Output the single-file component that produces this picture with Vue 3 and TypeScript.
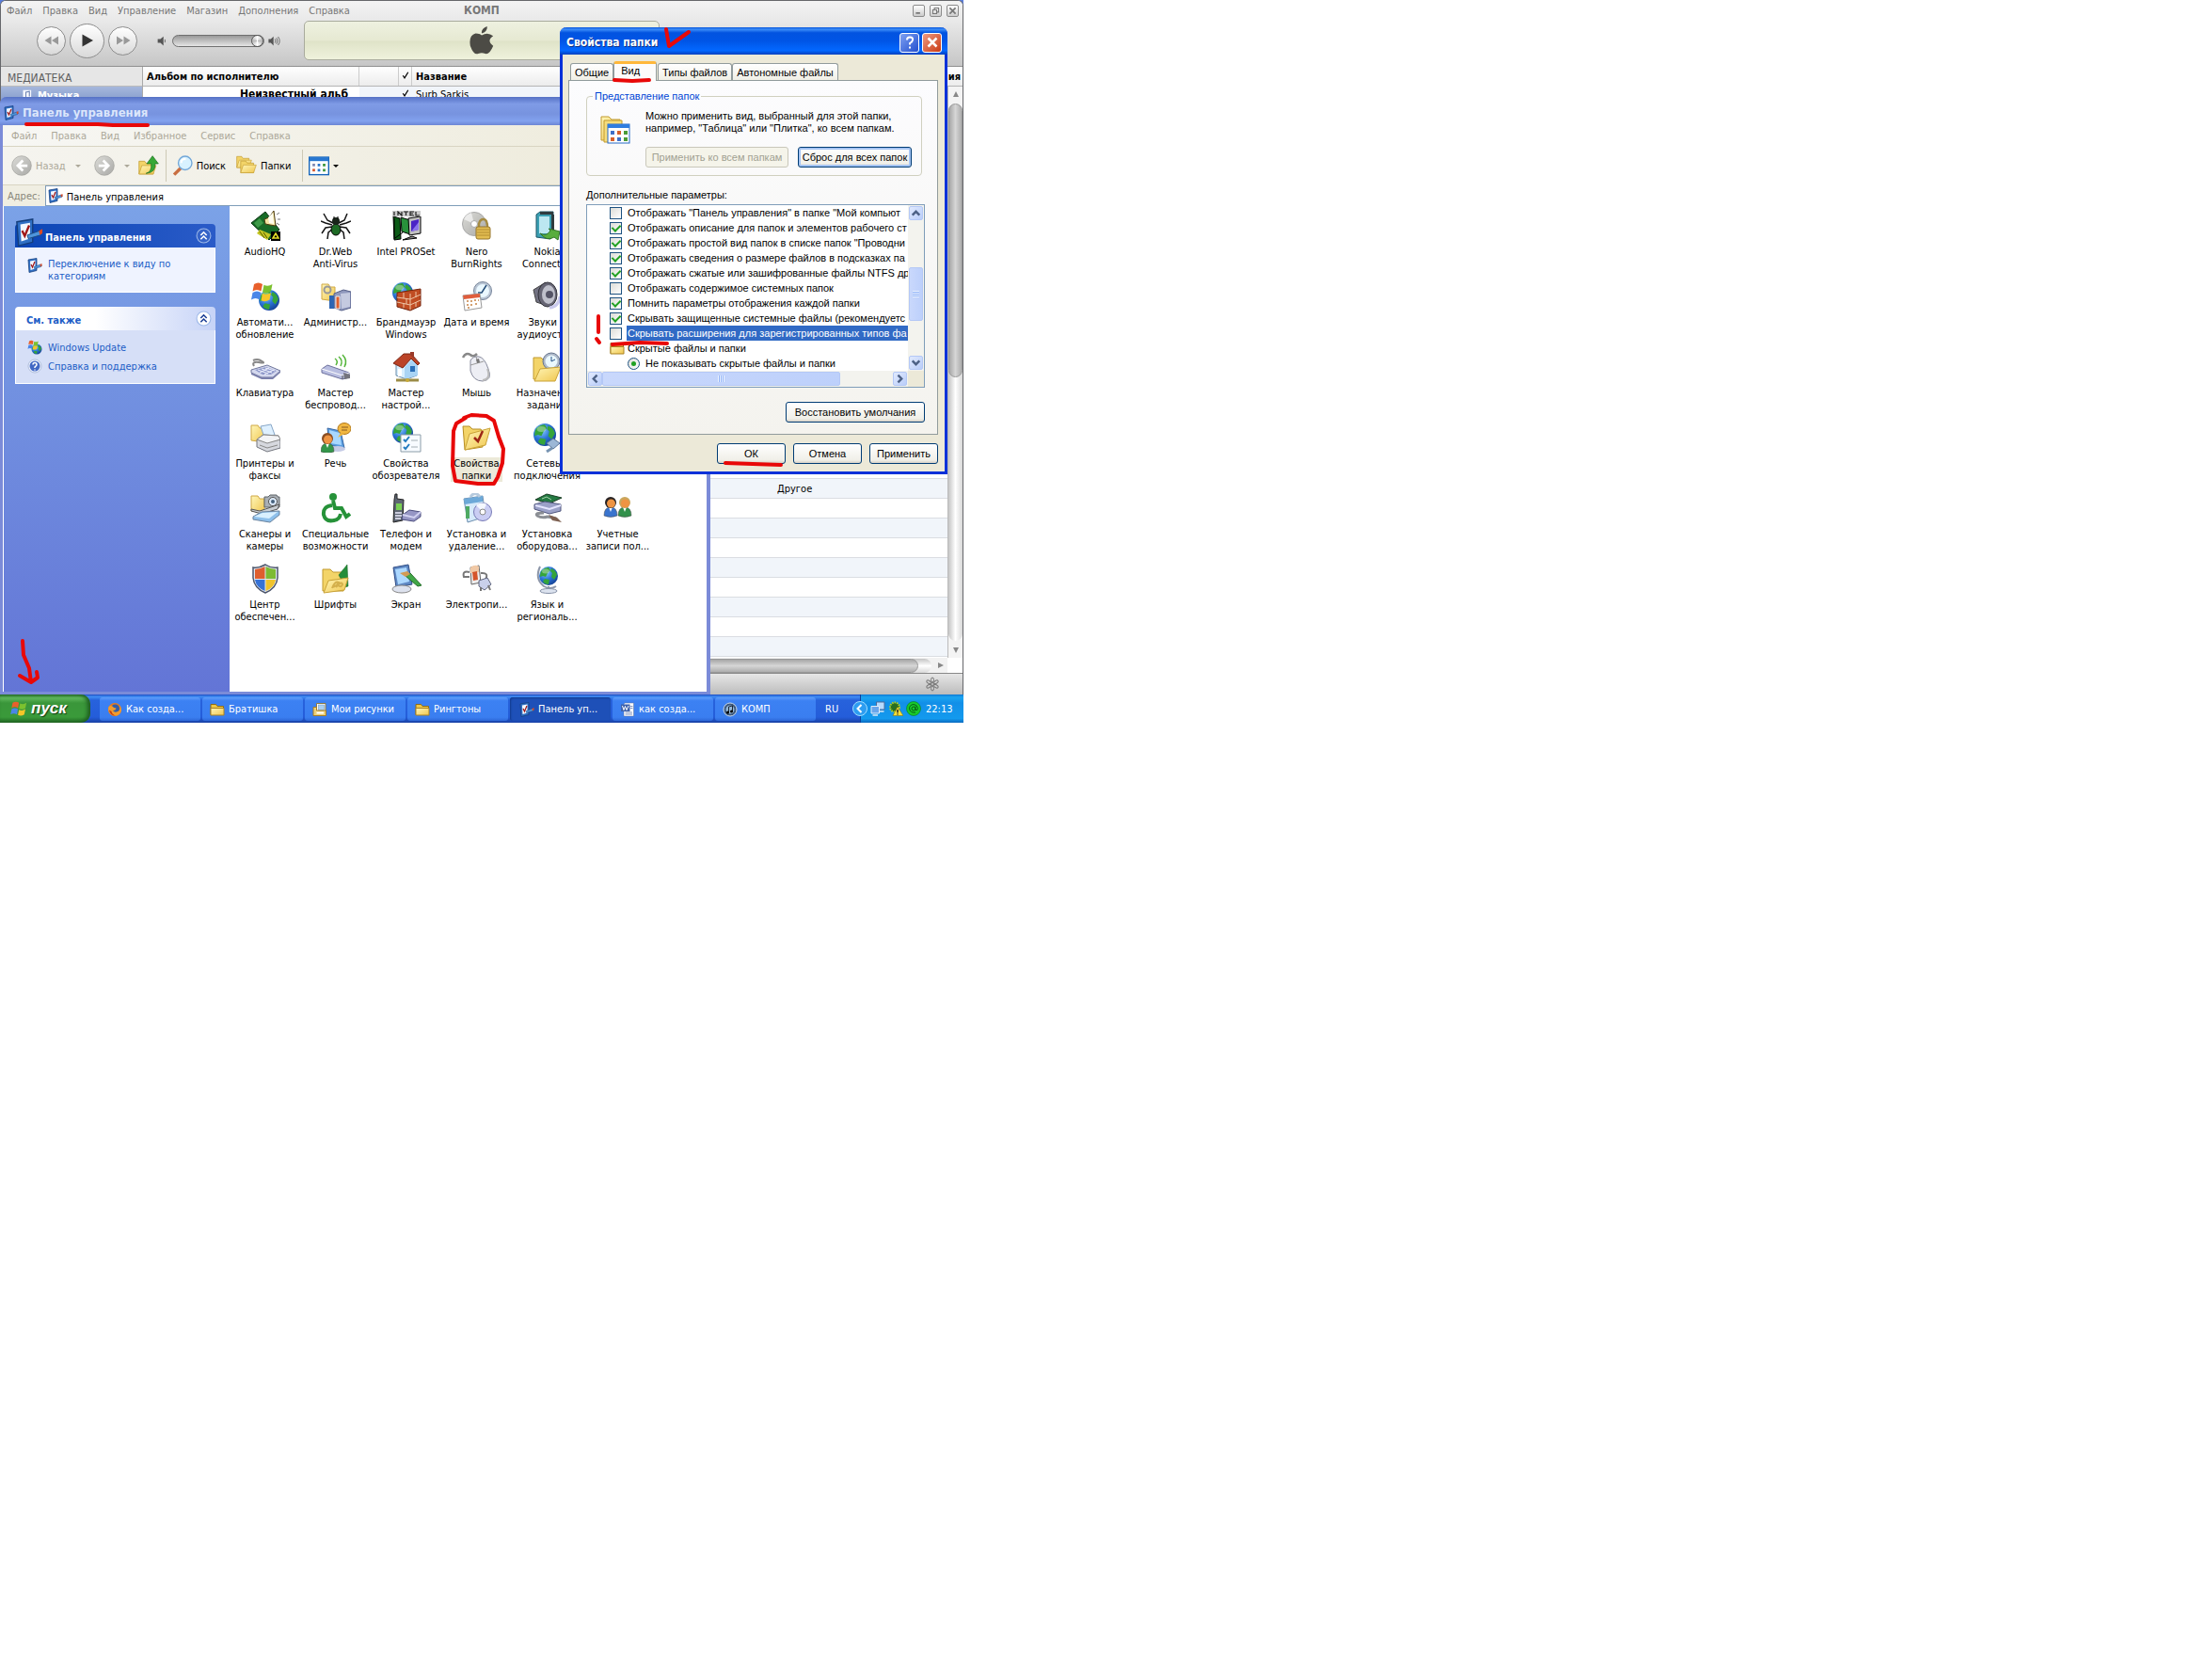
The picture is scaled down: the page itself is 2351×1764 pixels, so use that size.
<script setup lang="ts">
import { h, ref } from 'vue'

const globe = (x: number, y: number, r: number): string =>
  `<g transform="translate(${x} ${y}) scale(${r / 10})"><circle r="10" fill="url(#g-globe)"/><path d="M-7-6Q-4-9 0-9L2-6L-1-3L-3 1L-6 0L-9 1Q-9-4-7-6ZM3-8Q8-6 9-1L6 4L3 1L4-3L2-5ZM-4 3L1 4L0 9Q-4 9-6 6Z" fill="#35a43a"/><ellipse cx="-3" cy="-5" rx="4" ry="2.500" fill="#fff" opacity=".35"/></g>`

const folder = (x: number, y: number, s: number): string =>
  `<g transform="translate(${x} ${y}) scale(${s})"><path d="M1 2H9L11 5H21V20H1Z" fill="#f3d468" stroke="#c19a2e"/><path d="M1 20L5 8H25L21 20Z" fill="url(#g-folder)" stroke="#c9a236"/></g>`

const backFolder = `<path d="M1 3H8L10 6H15V21L1 19Z" fill="url(#g-folder)" stroke="#cfa845"/>`

const person = (x: number, y: number, hair: string, shirt: string): string =>
  `<g transform="translate(${x} ${y})"><path d="M0 20Q0 11 7 11Q14 11 14 20Q7 23 0 20Z" fill="${shirt}" stroke="#444" stroke-width=".5"/><path d="M5 11H9L7 16Z" fill="#fff"/><circle cx="7" cy="6" r="6" fill="${hair}"/><circle cx="7.500" cy="7" r="4.500" fill="#ee9443"/></g>`

const flag = (x: number, y: number, s: number): string =>
  `<g transform="translate(${x} ${y}) scale(${s})"><path d="M2 2Q5 0 8 2L7 7Q4 5 1 7Z" fill="#e8602c"/><path d="M9 2.500Q12 4 15 2L14 7Q11 9 8 7.500Z" fill="#7cc12f"/><path d="M1 8Q4 6 7 8L6 13Q3 11 0 13Z" fill="#4a86e8"/><path d="M8 8.500Q11 10 14 8L13 13Q10 15 7 13.500Z" fill="#f6c628"/></g>`

const applet = `<path d="M2 4L20 1V27L4 31Z" fill="#2f6fc4" stroke="#163f7c" stroke-width="1.500"/><path d="M6 7L17 5V23L7 26Z" fill="#f3f8ff"/><path d="M8 14L11 20L16 8" fill="none" stroke="#a01818" stroke-width="2.500"/><path d="M14 19L28 14L31 16L29 19L15 23Z" fill="#4e95dc" stroke="#1c4a80"/><path d="M27 14L31 12V17L28 19Z" fill="#d94a26"/>`

const drums = `<path d="M1 3H9L12 6H21V28H1Z" fill="url(#g-folder)" stroke="#c19a2e"/><path d="M4 7H23V30H4Z" fill="#f6dd7c" stroke="#c19a2e"/><rect x="8" y="11" width="23" height="20" fill="#fff" stroke="#2468c4"/><rect x="8" y="11" width="23" height="4" fill="#2f7de0"/><path d="M11 18h4v4h-4zM18 25h4v4h-4z" fill="#3f70c9"/><path d="M18 18h4v4h-4zM11 25h4v4h-4z" fill="#d9602c"/><path d="M25 18h4v4h-4zM25 25h4v4h-4z" fill="#4b9b37"/>`

const icons: Record<string, string> = {
  audio: `<path d="M1 13L16 1L31 20L20 31Z" fill="#176b26" stroke="#0b3413"/><path d="M4 13L10 8L14 13L8 18Z" fill="#3e9a48"/><path d="M7 24L10 20L22 25L18 31Z" fill="#c4c623"/><path d="M10 22l5 7M14 23l4 6" stroke="#565900"/><path d="M15 9L20 7L25 0L27 16L21 15L16 14Z" fill="#f4e6a2" stroke="#4b3a10"/><path d="M19 7L24 2L25 14L20 13Z" fill="#fffdf0"/><path d="M28 4l3-2M29 9h3M28 13l3 2" stroke="#777"/><rect x="22" y="22" width="10" height="10" fill="#000"/><path d="M24 29L27 24L30 29Z" fill="none" stroke="#e6df29" stroke-width="1.500"/>`,
  spider: `<g fill="none" stroke="#151515" stroke-width="1.500"><path d="M13 13L7 10L3 3M12 15L5 13L0 11M12 17L5 18L1 24M13 19L8 23L7 30M19 13L25 10L28 3M20 15L27 13L32 11M20 17L27 18L31 24M19 19L24 23L25 30"/></g><ellipse cx="16" cy="20" rx="5" ry="6" fill="#1d6a25" stroke="#000"/><circle cx="16" cy="11" r="4" fill="#1a251b"/><path d="M14 6v3M18 6v3" stroke="#000"/>`,
  intel: `<path d="M2 6L9 8L10 30L3 31Z" fill="#0c5b17" stroke="#000"/><path d="M10 7L20 10V25L11 22Z" fill="#28913b" stroke="#000"/><path d="M18 8L31 6V24L19 26Z" fill="#c0c0c0" stroke="#000"/><path d="M21 11L29 9V20L21 22Z" fill="#4b23c6"/><path d="M21 22L29 12V20Z" fill="#8d75eb"/><path d="M3 8V30M12 23L4 29M22 27L12 31L27 29Z" stroke="#000" fill="#888"/><path d="M1 0H31V6H1Z" fill="#c9c9c9"/><path d="M3 1v4M7 5V1L11 5V1M13 1H18M15.500 1V5M24 1H20V5H24M20 3H23M26 1V5H30" fill="none" stroke="#222" stroke-width="1.200"/>`,
  nero: `<circle cx="13" cy="14" r="12.500" fill="url(#g-disc)" stroke="#aaa"/><path d="M13 14L2 9A12 12 0 0 1 10 2Z" fill="#f7f7f7" opacity=".7"/><circle cx="13" cy="14" r="3.500" fill="#fff" stroke="#aaa"/><path d="M18 19V14Q19 9 23 9Q27 9 27 18" fill="none" stroke="#a58b42" stroke-width="2.500"/><rect x="15" y="17" width="15" height="13" rx="2" fill="#e2bd52" stroke="#95752a"/><path d="M16 20H29M16 23H29M16 26H29" stroke="#b28b2e"/>`,
  nokia: `<path d="M4 4L8 1H22V27L19 30L4 28Z" fill="#3b9fb2" stroke="#1c5668"/><path d="M7 6H18V24H7Z" fill="#bce7f1"/><path d="M8 1H22V4H8ZM20 4H23V25H20Z" fill="#2f3b3f"/><path d="M8 24Q15 28 19 21L17 19L29 22L27 31L23 28Q15 33 8 24Z" fill="#58ad3e" stroke="#33762a"/>`,
  update: `${globe(20, 20, 11)}${flag(1, 0, 1.5)}`,
  admin: `${backFolder}<path d="M14 13L24 9L32 11V28L22 31L14 28Z" fill="#8f98bd" stroke="#555f88"/><path d="M21 13L31 12V27L22 29Z" fill="#c4cae0"/><path d="M9 15H14V29H9Z" fill="#2d65b3"/><path d="M16 16H20V29H16Z" fill="#de5f2d" stroke="#eee"/><circle cx="7" cy="9" r="3.500" fill="none" stroke="#999" stroke-width="2"/>`,
  firewall: `${globe(12, 12, 11)}<path d="M6 12L31 8V26L20 31L6 27Z" fill="#c04c22" stroke="#74250e"/><path d="M6 17L20 19L31 14M6 22L20 25L31 20M20 13V30M13 12V18M13 23V28M26 11V17M26 22V27M16 18V24" stroke="#edc5a6" stroke-width="1" fill="none"/>`,
  date: `<circle cx="22" cy="10" r="9.500" fill="#b9c5d4" stroke="#77859a"/><circle cx="22" cy="10" r="7" fill="#eaf8ff"/><path d="M26 4L21 12H17" fill="none" stroke="#254d78" stroke-width="1.500"/><path d="M1 15L19 13L21 28L3 31Z" fill="#fff" stroke="#999"/><path d="M1 15L19 13V17L2 19Z" fill="#e05d3c"/><path d="M5 21h2M9 21h2M13 20h2M17 20h1M5 25h2M9 25h2M14 24h2M6 28h2" stroke="#d4a171" stroke-width="2"/>`,
  sound: `<path d="M1 9L14 1L16 26L4 22Z" fill="#727282" stroke="#444"/><ellipse cx="16" cy="14" rx="10" ry="13" fill="#666574" stroke="#34343c"/><ellipse cx="17" cy="14" rx="7" ry="10" fill="#bfc0cb"/><circle cx="18" cy="14" r="4" fill="#555466"/><path d="M18 28Q28 27 29 16" fill="none" stroke="#c9c9ed" stroke-width="3"/>`,
  keyboard: `<path d="M4 15Q1 10 9 11Q18 13 11 9Q7 7 3 9" fill="none" stroke="#888" stroke-width="2"/><path d="M1 19L18 14L32 20L24 27L12 27L1 22Z" fill="#d4d8ee" stroke="#70779c"/><path d="M5 19L17 16L28 20L22 24H13Z" fill="#8f99ca"/><path d="M8 19L19 23M12 18L23 22M16 17L26 20M10 22L20 17M15 24L25 19" stroke="#eef1ff"/><path d="M1 22L12 27H24L32 20V22L24 29H12L1 24Z" fill="#7b80ac"/>`,
  wireless: `<path d="M1 18L7 14L30 22V27L23 29L1 22Z" fill="#b8bde0" stroke="#6c709d"/><path d="M1 18L23 25L30 22" fill="none" stroke="#fff"/><path d="M23 25V29" stroke="#555"/><path d="M24 22L31 24V28L25 29Z" fill="#74747d"/><path d="M15 7q4 3 1 7M19 5q5 4 2 10M23 3q6 6 2 13" fill="none" stroke="#54b53a" stroke-width="1.500"/>`,
  home: `<path d="M5 12L16 4L27 11V25L16 29L5 25Z" fill="#d8efff" stroke="#6b8ba8"/><path d="M14 16L22 8L28 12V25L14 29Z" fill="#a9d4f5"/><path d="M2 12L13 2H21L30 12L28 14L21 7L12 17Z" fill="#bb4327" stroke="#7b2817"/><path d="M20 3V0H24V7Z" fill="#9a3a29"/><rect x="7" y="18" width="4" height="8" fill="#fff"/><rect x="20" y="15" width="5" height="6" fill="#2b6fb8"/><path d="M5 30H29" stroke="#9b8c47" stroke-width="3"/><circle cx="17" cy="30" r="2" fill="#c8aa38"/>`,
  mouse: `<path d="M1 6Q4 0 9 3Q12 6 16 2" fill="none" stroke="#888" stroke-width="2.500"/><path d="M9 9Q12 4 18 5Q24 6 28 18Q33 30 22 31Q12 31 9 20Z" fill="#edeef4" stroke="#86899b"/><path d="M9 14L23 10M15 5L17 12" stroke="#999" fill="none"/><path d="M15 8L18 7L19 11L16 12Z" fill="#777"/><path d="M22 30Q31 29 27 18" fill="none" stroke="#bbb" stroke-width="2"/>`,
  tasks: `<path d="M1 6H9L12 9H20V29H1Z" fill="#f3d468" stroke="#c19a2e"/><circle cx="20" cy="10" r="9" fill="#aeb9c9" stroke="#65748d"/><circle cx="20" cy="10" r="6.500" fill="#eaf8ff"/><path d="M20 5V10L24 8" fill="none" stroke="#245084"/><path d="M2 31L8 18L30 16L24 31Z" fill="url(#g-folder)" stroke="#c9a236"/>`,
  printer: `${backFolder}<path d="M11 4L22 2L26 13L15 16Z" fill="#def0ff" stroke="#86a6c7"/><path d="M7 18L14 13L30 14L32 20V27L18 31L7 26Z" fill="#d6d8de" stroke="#74777f"/><path d="M7 18L18 21L32 18M10 24L18 27L29 24" fill="none" stroke="#888"/><path d="M7 18L14 13L30 14L32 18L18 22Z" fill="#f3f4f6" stroke="#888"/>`,
  speech: `<path d="M7 6L21 9L25 27L9 24Z" fill="#5b9ee0" stroke="#3866a3"/><path d="M9 8L20 11L22 24L10 22Z" fill="#a8d8ff"/><ellipse cx="18" cy="28" rx="8" ry="3" fill="#c5cbe6"/><ellipse cx="25" cy="6.500" rx="7" ry="6" fill="#f1b741" stroke="#b37818"/><path d="M21 11L18 16L25 12Z" fill="#f1b741"/><path d="M22 5H29M22 8H28" stroke="#875b22"/>${person(0, 11, '#8b4d22', '#34964a')}`,
  internet: `${globe(12, 11, 11)}<path d="M10 13H31V31H10Z" fill="#f7fbff" stroke="#8b9ca8"/><path d="M13 18L15 20L19 15M13 26L15 28L19 23" fill="none" stroke="#237bc0" stroke-width="2"/><path d="M21 19H28M21 26H28" stroke="#a5b0b5"/>`,
  folderopts: `<path d="M1 4H8L11 7H20L22 10V26L3 29Z" fill="#f3d468" stroke="#b78d25"/><path d="M3 29L8 12L30 6L25 24Z" fill="url(#g-folder)" stroke="#c9a236"/><path d="M13 16L17 20L22 9" fill="none" stroke="#9d2715" stroke-width="2.500"/>`,
  network: `${globe(13, 13, 12)}<path d="M15 22L22 17L29 22L22 28Z" fill="#9cb7d6" stroke="#5a7699"/><path d="M21 27L15 31" stroke="#7794b2" stroke-width="3"/>`,
  scanner: `${backFolder}<path d="M15 4H19L21 2H28L29 4H31V15H15Z" fill="#a9afb5" stroke="#5f6469"/><circle cx="24" cy="9" r="4.500" fill="#dceafa" stroke="#555"/><circle cx="24" cy="9" r="2" fill="#46627d"/><path d="M1 17L10 19L31 12L29 17L12 22L1 19Z" fill="#c8cdd2" stroke="#555"/><path d="M3 25L12 20L31 19V23L21 31L3 28Z" fill="#8ec0eb" stroke="#6a839e"/><path d="M4 25L13 21L29 20L20 27Z" fill="#d9f0ff"/>`,
  access: `<circle cx="13" cy="4" r="4" fill="#269239"/><path d="M13 8L15 16H22L27 25L31 22" fill="none" stroke="#269239" stroke-width="4"/><path d="M12 13Q2 14 3 23Q5 31 14 29Q20 28 21 22" fill="none" stroke="#269239" stroke-width="4"/>`,
  phone: `<path d="M3 7L4 1H6V6L13 7L12 29L2 31Z" fill="#5e6672" stroke="#222"/><path d="M5 11H11V18H5Z" fill="#79cf54"/><path d="M4 21H11M4 24H11M4 27H10" stroke="#ccd" stroke-width="2"/><path d="M12 23L19 18L31 20V25L24 30L11 28Z" fill="#9696c5" stroke="#4b4d7d"/><path d="M12 23L24 26L31 20" fill="none" stroke="#d2d2f1" stroke-width="2"/>`,
  install: `<path d="M2 6L22 3L25 25L6 31Z" fill="#d6eafa" stroke="#6c8eaf"/><path d="M2 6L22 3V9L3 12Z" fill="#6da9d8"/><path d="M9 4Q14-3 19 4" fill="none" stroke="#b6cadd" stroke-width="3"/><path d="M6 14V27" stroke="#4faa63" stroke-width="4"/><circle cx="22" cy="20" r="9.500" fill="#cacdf3" stroke="#777ab5"/><path d="M22 20L15 13A9 9 0 0 1 26 12Z" fill="#f5f8ff"/><circle cx="22" cy="20" r="3" fill="#fff" stroke="#888"/>`,
  hardware: `<path d="M3 7L15 1L31 5L18 11Z" fill="#247a42" stroke="#193d23"/><path d="M10 6L15 4L20 7" stroke="#a5d0a8" fill="none"/><path d="M2 12L13 9L30 12V19L18 22L2 17Z" fill="#9ba1c8" stroke="#50567f"/><path d="M3 13L18 17L30 13" stroke="#e4e5ff" fill="none" stroke-width="2"/><path d="M12 21Q2 21 5 24Q10 27 16 25L25 27" fill="none" stroke="#8b8e94" stroke-width="3"/><path d="M17 23L26 26L31 31L21 29Z" fill="#7d6051"/>`,
  users: `${person(1, 4, '#292323', '#3974ce')}${person(16, 4, '#caa65c', '#32914b')}`,
  shield: `<path d="M16 1Q9 5 3 4V15Q4 26 16 31Q28 26 29 15V4Q22 5 16 1Z" fill="#dfe6f2" stroke="#4d566b" stroke-width="1.500"/><path d="M15.500 3Q10 6 5 6V16H15.500Z" fill="#df5e2e"/><path d="M16.500 3Q22 6 27 6V16H16.500Z" fill="#7dbb32"/><path d="M5 17H15.500V29Q6 25 5 17Z" fill="#3672d6"/><path d="M16.500 17H27Q26 25 16.500 29Z" fill="#f0c32c"/>`,
  fonts: `<path d="M2 6H10L13 9H24V29H2Z" fill="#f3d468" stroke="#c19a2e"/><path d="M19 12L28 1L29 24L26 25Z" fill="#258d39" stroke="#146322" stroke-width=".5"/><path d="M3 31L8 18L29 15L25 28Z" fill="url(#g-folder)" stroke="#c9a236"/><path d="M12 26Q15 18 19 20Q17 24 12 25M16 25Q22 18 23 22Q22 26 18 23" fill="none" stroke="#d4b04c" stroke-width="2"/>`,
  display: `<path d="M2 4L18 1L22 22L5 25Z" fill="#5e88c4" stroke="#314e86"/><path d="M4 6L16 4L19 19L7 22Z" fill="#acd8ff"/><ellipse cx="11" cy="27" rx="10" ry="4" fill="#dde2ee" stroke="#888"/><path d="M15 13L20 10L32 23L28 24Z" fill="#41a747" stroke="#276f2b"/><path d="M9 10L17 8L20 11L15 14Z" fill="#d29b56"/>`,
  power: `<path d="M9 4L18 2L20 20L10 22Z" fill="#eee" stroke="#666"/><path d="M9 4Q14 0 18 3V9L9 10Z" fill="#f1c9a6"/><path d="M11 9L16 8L17 17L12 18Z" fill="#d4552c"/><path d="M8 9Q0 7 2 14H8M20 10Q29 9 25 17" fill="none" stroke="#777" stroke-width="2"/><path d="M18 18L27 15L31 22L24 28L18 24Z" fill="#c9d0eb" stroke="#60667e"/><path d="M20 25V29M28 23L30 28" stroke="#777" stroke-width="2"/>`,
  region: `<path d="M8 3Q2 16 12 24Q19 28 25 24" fill="none" stroke="#8d97a9" stroke-width="2"/>${globe(17, 13, 10)}<path d="M17 24V28" stroke="#8d97a9" stroke-width="2"/><ellipse cx="17" cy="29" rx="9" ry="2.500" fill="#dce3ef" stroke="#8590a6"/>`,
  applet,
  drums,
  help: `<circle cx="16" cy="16" r="14" fill="#eef3ff" stroke="#8095bb"/><circle cx="16" cy="16" r="11" fill="#4268c4"/><path d="M12 13Q12 9 16 9Q20 9 20 13Q20 15 16 18V20M16 23V25" fill="none" stroke="#fff" stroke-width="3"/>`,
  folder: `<path d="M2 5H13L16 9H29V27H2Z" fill="#edc748" stroke="#8d6b17" stroke-width="2"/><path d="M2 13H30V28H2Z" fill="url(#g-folder)" stroke="#aa8221" stroke-width="2"/>`,
  folders: `${folder(0, 0, .95)}${folder(6, 7, 1)}`,
  up: `${folder(0, 7, 1.1)}<path d="M12 28Q21 26 20 13H13L22 1L31 13H26Q27 27 12 28Z" fill="#37a836" stroke="#196d20"/>`,
  search: `<path d="M3 30L13 20" stroke="#c96f42" stroke-width="5"/><circle cx="20" cy="12" r="10.500" fill="#d8f2ff" stroke="#73a7d8" stroke-width="2"/><path d="M14 12Q14 5 21 6" fill="none" stroke="#fff" stroke-width="3"/>`,
  views: `<rect x="1" y="3" width="30" height="27" fill="#fff" stroke="#1464ba" stroke-width="2"/><path d="M1 3H31V9H1Z" fill="#2877d0"/><path d="M6 13h4v4H6z" fill="#7c85b0"/><path d="M14 13h4v4h-4zM14 21h4v4h-4z" fill="#2874cc"/><path d="M22 13h4v4h-4zM22 21h4v4h-4z" fill="#3b953c"/><path d="M6 21h4v4H6z" fill="#d5572c"/>`,
  back: `<circle cx="16" cy="16" r="15" fill="url(#g-disc)" stroke="#a0a09c"/><path d="M18 8L10 16L18 24M11 16H25" fill="none" stroke="#fff" stroke-width="4"/>`,
  forward: `<circle cx="16" cy="16" r="15" fill="url(#g-disc)" stroke="#a0a09c"/><path d="M14 8L22 16L14 24M21 16H7" fill="none" stroke="#fff" stroke-width="4"/>`,
  chevrons: `<circle cx="16" cy="16" r="14" fill="currentColor" stroke="#9db8e8" stroke-width="2"/><path d="M10 15L16 9L22 15M10 23L16 17L22 23" fill="none" stroke="var(--mark)" stroke-width="3"/>`,
  flag: flag(2, 1, 1.9),
  firefox: `<circle cx="16" cy="16" r="14" fill="#e77a1c"/><circle cx="17" cy="14" r="9" fill="#315da8"/><path d="M3 10Q9 5 14 12L19 13Q18 18 12 18Q16 24 25 19Q29 13 25 6Q33 13 28 23Q21 33 10 28Q0 21 3 10Z" fill="#f09b2e"/><path d="M4 17Q6 29 18 29Q10 26 9 20Z" fill="#c33917"/>`,
  pictures: `<path d="M9 10V3H28V28H9Z" fill="#fff" stroke="#8b7a43" stroke-width="2"/><rect x="13" y="6" width="12" height="11" fill="#a9cff2" stroke="#698eb4"/><path d="M2 11H9V18H29V29H2Z" fill="#ecd078" stroke="#a57d27" stroke-width="2"/><path d="M9 21H24V25H9Z" fill="#fff"/>`,
  word: `<path d="M10 2H29V30H8V5Z" fill="#fff" stroke="#596f9d"/><path d="M22 9H27M22 13H27M11 22H26M11 26H26" stroke="#7d91bd" stroke-width="2"/><rect x="2" y="5" width="19" height="15" fill="#3f62ac"/><path d="M5 8L8 17L11 9L14 17L18 8" fill="none" stroke="#fff" stroke-width="2"/>`,
  itunes: `<circle cx="16" cy="16" r="14" fill="#3d587c" stroke="#c9d9e8" stroke-width="2"/><circle cx="16" cy="16" r="9" fill="#94b8d9"/><path d="M13 22V10L21 8V20" fill="none" stroke="#1d2939" stroke-width="2"/><circle cx="11" cy="22" r="3"/><circle cx="19" cy="20" r="3"/>`,
  trayarrow: `<circle cx="16" cy="16" r="15" fill="#2d9df1" stroke="#a0ddff" stroke-width="2"/><path d="M19 8L11 16L19 24" fill="none" stroke="#fff" stroke-width="4"/>`,
  computers: `<path d="M13 2H30V18H13Z" fill="#b7dbff" stroke="#4d6b9a" stroke-width="2"/><path d="M2 11H19V26H2Z" fill="#69a6eb" stroke="#e1edf9" stroke-width="2"/><path d="M5 30H16M20 22H29" stroke="#dce7f5" stroke-width="3"/>`,
  guard: `<circle cx="14" cy="13" r="10" fill="#286f20" stroke="#b0d227" stroke-width="4" stroke-dasharray="3 2"/><path d="M20 12L32 31H10Z" fill="#f8e036" stroke="#776a11"/><path d="M20 18V25M20 27V29" stroke="#222" stroke-width="3"/>`,
  agent: `<circle cx="16" cy="16" r="15" fill="#18c92c" stroke="#086b13" stroke-width="1"/><g fill="none" stroke="#075f12" stroke-width="2"><circle cx="16" cy="16" r="4"/><path d="M20 11V19Q25 21 25 15Q23 7 16 7Q7 8 7 16Q9 26 20 24"/></g>`,
  apple: `<path d="M22 0Q23 6 16 8Q15 3 22 0ZM16 10Q23 6 29 11Q21 16 29 22Q25 32 20 31Q16 29 12 31Q7 33 3 22Q1 10 9 8Q13 8 16 10Z" fill="currentColor"/>`,
  play: `<path d="M5 3L28 16L5 29Z" fill="currentColor"/>`,
  rewind: `<path d="M15 7V25L1 16ZM30 7V25L16 16Z" fill="currentColor"/>`,
  skip: `<path d="M2 7V25L16 16ZM17 7V25L31 16Z" fill="currentColor"/>`,
  speaker: `<path d="M4 11H11L19 4V28L11 21H4Z" fill="currentColor"/><path d="M23 12V20" stroke="currentColor" stroke-width="2"/>`,
  loud: `<path d="M1 11H7L14 4V28L7 21H1Z" fill="currentColor"/><path d="M18 11Q21 16 18 21M22 8Q27 16 22 24M26 5Q34 16 26 27" fill="none" stroke="currentColor" stroke-width="2"/>`,
  note: `<path d="M4 2H27V30H4Z" fill="#f8faff"/><path d="M12 22V8L22 6V20" fill="none" stroke="#7186b3" stroke-width="3"/>`,
  gear: `<g fill="none" stroke="currentColor" stroke-width="2"><circle cx="16" cy="16" r="3"/><ellipse cx="16" cy="7" rx="3" ry="5"/><ellipse cx="16" cy="25" rx="3" ry="5"/><ellipse cx="16" cy="7" rx="3" ry="5" transform="rotate(60 16 16)"/><ellipse cx="16" cy="7" rx="3" ry="5" transform="rotate(120 16 16)"/><ellipse cx="16" cy="7" rx="3" ry="5" transform="rotate(240 16 16)"/><ellipse cx="16" cy="7" rx="3" ry="5" transform="rotate(300 16 16)"/></g>`,
  min: `<path d="M7 23H20" stroke="currentColor" stroke-width="5"/>`,
  restore: `<path d="M12 12V7H25V20H20M7 13H19V25H7Z" fill="none" stroke="currentColor" stroke-width="3"/>`,
  close: `<path d="M7 7L25 25M25 7L7 25" stroke="currentColor" stroke-width="5"/>`,
  question: `<path d="M10 11Q10 5 16 5Q23 5 22 11Q22 14 16 18V21M16 25V29" fill="none" stroke="currentColor" stroke-width="4"/>`,
  up1: `<path d="M5 22L16 11L27 22" fill="none" stroke="currentColor" stroke-width="7"/>`,
  down1: `<path d="M5 10L16 21L27 10" fill="none" stroke="currentColor" stroke-width="7"/>`,
  left1: `<path d="M22 5L11 16L22 27" fill="none" stroke="currentColor" stroke-width="7"/>`,
  right1: `<path d="M10 5L21 16L10 27" fill="none" stroke="currentColor" stroke-width="7"/>`,
  tick: `<path d="M5 17L12 27L27 3" fill="none" stroke="currentColor" stroke-width="5"/>`,
}

const Icon = (props: { name: string }) =>
  h('svg', { viewBox: '0 0 32 32', 'aria-hidden': 'true', innerHTML: icons[props.name] })
Icon.props = ['name']

const playerMenu = ['Файл', 'Правка', 'Вид', 'Управление', 'Магазин', 'Дополнения', 'Справка']
const panelMenu = ['Файл', 'Правка', 'Вид', 'Избранное', 'Сервис', 'Справка']
const trackRows = Array.from({ length: 28 }, (_, i) => (i === 19 ? 'Другое' : ''))

interface Applet { icon: string; label: string }
const applets: Applet[] = [
  { icon: 'audio', label: 'AudioHQ' },
  { icon: 'spider', label: 'Dr.Web\nAnti-Virus' },
  { icon: 'intel', label: 'Intel PROSet' },
  { icon: 'nero', label: 'Nero\nBurnRights' },
  { icon: 'nokia', label: 'Nokia\nConnecti...' },
  { icon: 'update', label: 'Автомати...\nобновление' },
  { icon: 'admin', label: 'Администр...' },
  { icon: 'firewall', label: 'Брандмауэр\nWindows' },
  { icon: 'date', label: 'Дата и время' },
  { icon: 'sound', label: 'Звуки и\nаудиоустр...' },
  { icon: 'keyboard', label: 'Клавиатура' },
  { icon: 'wireless', label: 'Мастер\nбеспровод...' },
  { icon: 'home', label: 'Мастер\nнастрой...' },
  { icon: 'mouse', label: 'Мышь' },
  { icon: 'tasks', label: 'Назначенн...\nзадания' },
  { icon: 'printer', label: 'Принтеры и\nфаксы' },
  { icon: 'speech', label: 'Речь' },
  { icon: 'internet', label: 'Свойства\nобозревателя' },
  { icon: 'folderopts', label: 'Свойства\nпапки' },
  { icon: 'network', label: 'Сетевые\nподключения' },
  { icon: 'scanner', label: 'Сканеры и\nкамеры' },
  { icon: 'access', label: 'Специальные\nвозможности' },
  { icon: 'phone', label: 'Телефон и\nмодем' },
  { icon: 'install', label: 'Установка и\nудаление...' },
  { icon: 'hardware', label: 'Установка\nоборудова...' },
  { icon: 'users', label: 'Учетные\nзаписи пол...' },
  { icon: 'shield', label: 'Центр\nобеспечен...' },
  { icon: 'fonts', label: 'Шрифты' },
  { icon: 'display', label: 'Экран' },
  { icon: 'power', label: 'Электропи...' },
  { icon: 'region', label: 'Язык и\nрегиональ...' },
]
const appletRows: Applet[][] = [
  applets.slice(0, 5), applets.slice(5, 10), applets.slice(10, 15),
  applets.slice(15, 20), applets.slice(20, 26), applets.slice(26),
]

const tabs = ['Общие', 'Вид', 'Типы файлов', 'Автономные файлы']
const activeTab = ref('Вид')

const options = ref([
  { text: 'Отображать "Панель управления" в папке "Мой компьют', on: false },
  { text: 'Отображать описание для папок и элементов рабочего ст', on: true },
  { text: 'Отображать простой вид папок в списке папок "Проводни', on: true },
  { text: 'Отображать сведения о размере файлов в подсказках па', on: true },
  { text: 'Отображать сжатые или зашифрованные файлы NTFS др', on: true },
  { text: 'Отображать содержимое системных папок', on: false },
  { text: 'Помнить параметры отображения каждой папки', on: true },
  { text: 'Скрывать защищенные системные файлы (рекомендуетс', on: true },
  { text: 'Скрывать расширения для зарегистрированных типов фа', on: false },
])
const selected = 8

const tasks = [
  { icon: 'firefox', label: 'Как созда...' },
  { icon: 'folder', label: 'Братишка' },
  { icon: 'pictures', label: 'Мои рисунки' },
  { icon: 'folder', label: 'Рингтоны' },
  { icon: 'applet', label: 'Панель уп...' },
  { icon: 'word', label: 'как созда...' },
  { icon: 'itunes', label: 'КОМП' },
]
</script>

<template>
  <div class="desktop">
    <svg class="defs" aria-hidden="true">
      <defs>
        <radialGradient id="g-globe" cx=".35" cy=".3" r=".8"><stop offset="0" stop-color="#8fd0ff" /><stop offset=".5" stop-color="#2a74d6" /><stop offset="1" stop-color="#113a8c" /></radialGradient>
        <linearGradient id="g-folder" x1="0" y1="0" x2="1" y2="1"><stop offset="0" stop-color="#fff6b8" /><stop offset="1" stop-color="#f0c64e" /></linearGradient>
        <linearGradient id="g-disc" x1="0" y1="0" x2="1" y2="1"><stop offset="0" stop-color="#dcdcd8" /><stop offset="1" stop-color="#a9a9a6" /></linearGradient>
      </defs>
    </svg>

    <main class="workspace">
      <section class="player" aria-label="КОМП">
        <header class="player-top">
          <nav class="player-menu"><button v-for="m in playerMenu" :key="m">{{ m }}</button></nav>
          <h1>КОМП</h1>
          <div class="player-controls">
            <button v-for="b in ['min', 'restore', 'close']" :key="b" :aria-label="b"><Icon :name="b" /></button>
          </div>
        </header>
        <div class="player-bar">
          <div class="transport">
            <button class="round" aria-label="Назад"><Icon name="rewind" /></button>
            <button class="round big" aria-label="Играть"><Icon name="play" /></button>
            <button class="round" aria-label="Вперед"><Icon name="skip" /></button>
            <div class="volume">
              <Icon name="speaker" />
              <input type="range" value="100" aria-label="Громкость">
              <Icon name="loud" />
            </div>
          </div>
          <div class="lcd"><Icon name="apple" /></div>
        </div>
        <div class="library">
          <aside class="sources">
            <h2>МЕДИАТЕКА</h2>
            <div class="source"><Icon name="note" />Музыка</div>
          </aside>
          <div class="tracks">
            <div class="track head"><span>Альбом по исполнителю</span><span></span><span><Icon name="tick" class="tick" /></span><span>Название</span><span class="last">ия</span></div>
            <div class="track first"><b>Неизвестный альб</b><span></span><span><Icon name="tick" class="tick" /></span><span>Surb Sarkis</span></div>
            <div v-for="(genre, i) in trackRows" :key="i" class="track"><span class="genre">{{ genre }}</span></div>
            <div class="aqua-v"><i class="tri-up"></i><div class="aqua-track"><div class="aqua-thumb"></div></div><i class="tri-down"></i></div>
            <div class="aqua-h"><div class="aqua-track"><div class="aqua-thumb"></div></div><i class="tri-right"></i></div>
          </div>
        </div>
        <footer class="player-foot"><Icon name="gear" /></footer>
      </section>

      <section class="panel" aria-label="Панель управления">
        <header class="panel-title"><Icon name="applet" /><h2>Панель управления</h2></header>
        <nav class="panel-menu"><button v-for="m in panelMenu" :key="m">{{ m }}</button></nav>
        <div class="panel-tools">
          <button class="dim"><Icon name="back" />Назад<i class="caret"></i></button>
          <button class="dim fwd" aria-label="Вперед"><Icon name="forward" /><i class="caret"></i></button>
          <button class="upbtn" aria-label="Вверх"><Icon name="up" /></button>
          <button class="cut find"><Icon name="search" />Поиск</button>
          <button class="dirs"><Icon name="folders" />Папки</button>
          <button class="cut view" aria-label="Вид"><Icon name="views" /><i class="caret"></i></button>
        </div>
        <div class="address">
          <label for="address">Адрес:</label>
          <div class="address-box"><Icon name="applet" /><input id="address" value="Панель управления"></div>
        </div>
        <div class="panel-body">
          <aside class="side">
            <section class="card primary">
              <header><Icon name="applet" class="emblem" /><h3>Панель управления</h3><Icon name="chevrons" class="fold" /></header>
              <div class="card-body"><a href="#"><Icon name="applet" />Переключение к виду по категориям</a></div>
            </section>
            <section class="card">
              <header><h3>См. также</h3><Icon name="chevrons" class="fold" /></header>
              <div class="card-body">
                <a href="#"><Icon name="update" />Windows Update</a>
                <a href="#"><Icon name="help" />Справка и поддержка</a>
              </div>
            </section>
          </aside>
          <div class="applets">
            <div v-for="(row, r) in appletRows" :key="r" class="applet-row">
              <button v-for="a in row" :key="a.label" :class="{ picked: a.icon === 'folderopts' }">
                <Icon :name="a.icon" /><span>{{ a.label }}</span>
              </button>
            </div>
          </div>
        </div>
      </section>

      <section class="dialog" role="dialog" aria-label="Свойства папки">
        <header class="dialog-title">
          <h2>Свойства папки</h2>
          <button class="ask" aria-label="Справка"><Icon name="question" /></button>
          <button class="shut" aria-label="Закрыть"><Icon name="close" /></button>
        </header>
        <div class="dialog-body">
          <div class="tabs" role="tablist">
            <button v-for="t in tabs" :key="t" role="tab" :class="{ active: t === activeTab }" @click="activeTab = t">{{ t }}</button>
          </div>
          <div class="sheet">
            <fieldset>
              <legend>Представление папок</legend>
              <Icon name="drums" class="fs-icon" />
              <div>
                <p>Можно применить вид, выбранный для этой папки,<br>например, "Таблица" или "Плитка", ко всем папкам.</p>
                <div class="fs-buttons">
                  <button class="xp apply-all" disabled>Применить ко всем папкам</button>
                  <button class="xp focus">Сброс для всех папок</button>
                </div>
              </div>
            </fieldset>
            <p class="caption">Дополнительные параметры:</p>
            <div class="list">
              <div class="list-rows">
                <label v-for="(o, i) in options" :key="i" :class="{ selected: i === selected }">
                  <input v-model="o.on" type="checkbox"><span>{{ o.text }}</span>
                </label>
                <div class="group"><Icon name="folder" /><span>Скрытые файлы и папки</span></div>
                <label class="nested"><input type="radio" name="hidden" checked><span>Не показывать скрытые файлы и папки</span></label>
              </div>
              <div class="bar-v"><button aria-label="Вверх"><Icon name="up1" /></button><div class="rail"><i></i></div><button aria-label="Вниз"><Icon name="down1" /></button></div>
              <div class="bar-h"><button aria-label="Влево"><Icon name="left1" /></button><div class="rail"><i></i></div><button aria-label="Вправо"><Icon name="right1" /></button></div>
              <div class="corner"></div>
            </div>
            <button class="xp restore">Восстановить умолчания</button>
          </div>
          <footer><button class="xp">ОК</button><button class="xp">Отмена</button><button class="xp">Применить</button></footer>
        </div>
      </section>
    </main>

    <nav class="taskbar">
      <button class="start"><Icon name="flag" />пуск</button>
      <div class="tasks">
        <button v-for="(t, i) in tasks" :key="i" :class="{ pressed: i === 4 }"><Icon :name="t.icon" />{{ t.label }}</button>
      </div>
      <span class="lang">RU</span>
      <div class="tray">
        <button class="expand" aria-label="Показать значки"><Icon name="trayarrow" /></button>
        <Icon name="computers" /><Icon name="guard" /><Icon name="agent" />
        <time>22:13</time>
      </div>
    </nav>

    <svg class="marker" viewBox="0 0 1024 768" aria-hidden="true">
      <path d="M28 132L104 132L120 133L157 133" />
      <path d="M708 31L711 49L732 34" />
      <path d="M653 85L672 86L690 85" />
      <path d="M636 336V353M634 360L637 364" />
      <path d="M651 366L680 364L709 365" />
      <path d="M771 492L800 493L830 494" />
      <path d="M493 444L501 441L517 442L525 447L530 464L535 477L534 492L529 507L525 514L508 514L484 511L481 495L482 458L485 450L495 444Z" />
      <path d="M24 681L25 696L31 710L33 725L40 720L39 714M21 718L33 725" />
    </svg>
  </div>
</template>

<style>
body { margin: 0; background: #fff; }
</style>

<style scoped>
.desktop {
  --ui: "DejaVu Sans Condensed", "DejaVu Sans", "Noto Sans", sans-serif;
  position: relative;
  display: flex;
  flex-direction: column;
  width: 100%;
  max-width: 1024px;
  aspect-ratio: 4 / 3;
  overflow: hidden;
  background: #5a7edc;
  font: 11px/13px var(--ui);
  color: #000;
}
* { box-sizing: border-box; }
h1, h2, h3, p { margin: 0; font-size: inherit; }
button { margin: 0; padding: 0; border: 0; background: none; font: inherit; color: inherit; white-space: nowrap; }
svg { flex: none; width: 16px; height: 16px; }
.defs { position: absolute; width: 0; height: 0; }
.workspace { position: relative; flex: 1; }
.marker { position: absolute; inset: 0; width: 100%; height: 100%; pointer-events: none; fill: none; stroke: #e80808; stroke-width: 4; stroke-linecap: round; stroke-linejoin: round; }

/* media player */
.player { position: absolute; inset: 0; display: flex; flex-direction: column; border: 1px solid #66676b; border-width: 1px 1px 0; border-radius: 6px 6px 0 0; overflow: hidden; background: #fff; }
.player-top { display: grid; grid-template-columns: 1fr auto 1fr; align-items: center; height: 21px; background: linear-gradient(#f3f3f3, #e9e9e9); color: #777; }
.player-menu { display: flex; gap: 11px; padding-left: 6px; }
.player-top h1 { font-size: 12px; color: #787878; }
.player-controls { display: flex; justify-content: flex-end; gap: 5px; padding-right: 4px; }
.player-controls button { display: grid; width: 13px; height: 13px; border: 1px solid #8b8b8b; border-radius: 2px; background: linear-gradient(#fff, #ccc); color: #777; }
.player-controls svg { width: 11px; height: 11px; }
.player-bar { display: grid; grid-template-columns: 1fr 378px 1fr; height: 49px; border-bottom: 1px solid #909090; background: linear-gradient(#e9e9e9, #c6c6c6); }
.transport { display: flex; align-items: center; gap: 4px; height: 42px; padding-left: 38px; }
.round { display: grid; place-items: center; width: 31px; height: 31px; border: 1px solid #8d8d8d; border-radius: 50%; background: linear-gradient(#fff, #d9d9d9); color: #999; }
.round.big { width: 37px; height: 37px; color: #333; }
.volume { display: flex; align-items: center; gap: 4px; margin-left: 16px; color: #555; }
.volume svg { width: 13px; height: 13px; }
.volume input { appearance: none; width: 98px; height: 13px; margin: 0; border: 1px solid #6f6f6f; border-radius: 7px; background: linear-gradient(#999, #e5e5e5); }
.volume input::-webkit-slider-thumb { appearance: none; width: 13px; height: 13px; border: 1px solid #555; border-radius: 50%; background: conic-gradient(#fff, #bbb, #fff, #bbb, #fff); }
.lcd { display: grid; place-items: center; height: 42px; border: 1px solid #a9ab9d; border-radius: 5px; background: linear-gradient(#eef1e0, #e6e9d2 50%, #dfe3c8 52%, #eff2dc); color: #4c4b45; }
.lcd svg { width: 30px; height: 30px; }
.library { display: flex; flex: 1; min-height: 0; overflow: hidden; }
.sources { width: 150px; background: #d8dee8; }
.sources h2 { height: 21px; padding-left: 7px; border-bottom: 1px solid #bbb; background: #e6e6e6; font: 12px/24px var(--ui); color: #5e5e5e; }
.source { display: flex; align-items: center; gap: 5px; height: 18px; padding-left: 22px; background: linear-gradient(#a5b7dc, #8199ca); color: #fff; font-weight: bold; }
.source svg { width: 12px; height: 12px; }
.tracks { position: relative; flex: 1; overflow: hidden; border-left: 1px solid #aaa; }
.track { display: grid; grid-template-columns: 230px 42px 14px 1fr auto; align-items: center; height: 21px; border-bottom: 1px solid #dadde2; }
.track:nth-child(even) { background: #f1f5fa; }
.track.head { height: 21px; background: linear-gradient(#fff, #ececec); border-color: #b5b5b5; font-weight: bold; font-size: 11px; }
.track.head span { padding-left: 4px; }
.track.head span:nth-child(-n+3) { height: 100%; padding-top: 4px; border-right: 1px solid #ccc; }
.track .last { padding-right: 2px; }
.track .tick { width: 8px; height: 10px; }
.track.first { height: 18px; background: linear-gradient(90deg, #fff 230px, #f1f5fa 230px); }
.track.first span { padding-left: 4px; }
.track.head span:nth-child(3), .track.first span:nth-child(3) { padding-left: 3px; }
.track.first b { padding-right: 12px; font-size: 12px; text-align: right; }
.track .genre { grid-column: 4; padding-left: 388px; }
.aqua-v { position: absolute; top: 21px; right: 0; bottom: 16px; display: flex; flex-direction: column; align-items: center; justify-content: space-between; width: 16px; padding: 5px 0; border-left: 1px solid #bbb; background: #f4f4f4; }
.aqua-v .aqua-track { flex: 1; width: 15px; margin: 7px 0; border-radius: 8px; background: linear-gradient(90deg, #c4c4c4, #fff 50%, #d8d8d8); }
.aqua-v .aqua-thumb { width: 15px; height: 51%; border: 1px solid #999; border-radius: 8px; background: linear-gradient(90deg, #a7a7a7, #d6d6d6 50%, #adadad); }
.aqua-h { position: absolute; right: 16px; bottom: 0; left: 0; display: flex; align-items: center; height: 16px; padding-right: 4px; background: #f2f2f2; }
.aqua-h .aqua-track { flex: 1; height: 15px; margin-right: 7px; padding-right: 14px; border-radius: 8px; background: linear-gradient(#c4c4c4, #fff 50%, #d8d8d8); }
.aqua-h .aqua-thumb { height: 15px; border: 1px solid #999; border-radius: 8px; background: linear-gradient(#a7a7a7, #d6d6d6 50%, #adadad); }
.tri-up, .tri-down, .tri-right { border: 3px solid transparent; }
.tri-up { border-width: 0 3px 6px; border-bottom-color: #888; }
.tri-down { border-width: 6px 3px 0; border-top-color: #888; }
.tri-right { border-width: 3px 0 3px 6px; border-left-color: #888; }
.player-foot { display: flex; align-items: center; justify-content: flex-end; height: 23px; padding-right: 24px; border-top: 1px solid #888; background: linear-gradient(#e6e6e6, #bcbcbc); color: #777; }

/* control panel window */
.panel { position: absolute; top: 103px; bottom: 0; left: 0; display: flex; flex-direction: column; width: 755px; padding: 0 4px 3px 3px; border-radius: 7px 7px 0 0; background: #7b8bd8; }
.panel-title { display: flex; align-items: center; gap: 4px; height: 30px; margin: 0 -4px 0 -3px; padding: 4px 4px 0; border-radius: 7px 7px 0 0; background: linear-gradient(#5571c5, #7f9be6 25%, #7793df 60%, #82a1ee 85%, #6c86d5); color: #dbe6fb; }
.panel-title h2 { font: bold 13px/18px var(--ui); }
.panel-menu { display: flex; align-items: center; gap: 15px; height: 23px; padding-left: 9px; border-bottom: 1px solid #d8d4c2; background: linear-gradient(90deg, #f7f7f4, #edead9); color: #aca899; }
.panel-tools { display: flex; align-items: center; height: 40px; padding-left: 9px; background: linear-gradient(90deg, #f5f4ef, #edead9); }
.panel-tools button { display: flex; align-items: center; gap: 4px; }
.panel-tools svg { width: 22px; height: 22px; }
.panel-tools .dim { color: #aca899; }
.caret { border: 3px solid transparent; border-top-color: currentColor; border-bottom: 0; margin-left: 6px; }
.panel-tools .fwd { margin-left: 14px; }
.panel-tools .upbtn { margin-left: 9px; }
.panel-tools .cut { height: 34px; padding-left: 6px; border-left: 1px solid #cdc9b5; }
.panel-tools .find { margin-left: 7px; }
.panel-tools .dirs { margin-left: 11px; }
.panel-tools .view { margin-left: 12px; }
.panel-tools .view .caret { margin-left: 0; }
.address { display: flex; align-items: center; height: 23px; gap: 5px; padding-left: 5px; border-top: 1px solid #d8d4c2; background: #f0eee2; color: #88867a; }
.address-box { display: flex; flex: 1; align-items: center; gap: 4px; height: 22px; padding-left: 2px; border: 1px solid #7f9db9; background: #fff; }
.address-box input { flex: 1; border: 0; padding: 2px 0 0; font: inherit; }
.panel-body { display: flex; flex: 1; min-height: 0; border-left: 1px solid #fff; background: #fff; }
.side { width: 240px; padding: 19px 15px 0 12px; background: linear-gradient(#7ba2e7, #6375d6); }
.card { margin-bottom: 15px; color: #215dc6; }
.card header { position: relative; display: flex; align-items: center; justify-content: space-between; height: 25px; padding: 0 4px 0 12px; border-radius: 4px 4px 0 0; background: linear-gradient(90deg, #fff 40%, #c6d3f7); --mark: #1c3f95; }
.card.primary header { padding-left: 32px; background: linear-gradient(90deg, #0b45b5, #2a5bc8); color: #fff; --mark: #fff; }
.card h3 { padding-top: 3px; }
.card .fold { width: 17px; height: 17px; color: #fff; }
.card.primary .fold { color: #3563c8; }
.card .emblem { position: absolute; bottom: 0; left: 0; width: 30px; height: 32px; }
.card-body { display: flex; flex-direction: column; gap: 4px; padding: 10px 12px; border: 1px solid #fff; border-top: 0; background: #d6dff7; }
.primary .card-body { padding-top: 11px; background: #eff3ff; }
.card a { display: flex; gap: 6px; color: inherit; text-decoration: none; min-height: 16px; line-height: 13px; align-items: center; }
.primary a { align-items: flex-start; }
.applets { flex: 1; padding: 5px 0 0; }
.applet-row { display: flex; height: 75px; }
.applets button { display: flex; flex-direction: column; align-items: center; gap: 5px; width: 75px; }
.applets svg { width: 32px; height: 32px; }
.applets span { white-space: pre; padding: 0 3px; }
.applets .picked span { background: #ece9d8; }

/* folder options dialog */
.dialog { position: absolute; top: 29px; left: 595px; display: flex; flex-direction: column; width: 412px; border: 3px solid #0831d9; border-top: 0; border-radius: 7px 7px 0 0; background: #ece9d8; font: 11px/13px "Liberation Sans", sans-serif; }
.dialog-title { display: flex; align-items: center; gap: 3px; height: 29px; margin: 0 -3px; padding: 3px 6px 0 7px; border-radius: 7px 7px 0 0; background: linear-gradient(#0a58dc, #3b8cf8 8%, #0253e0 20%, #0055e6 50%, #0368ff 85%, #0140bd); color: #fff; }
.dialog-title h2 { flex: 1; font: bold 12px/18px var(--ui); text-shadow: 1px 1px #0f2f80; }
.dialog-title button { display: grid; place-items: center; width: 21px; height: 21px; border: 1px solid #fff; border-radius: 3px; background: linear-gradient(135deg, #7da0f2, #2450cf); }
.dialog-title .shut { background: linear-gradient(135deg, #f09a80, #c93a14); }
.dialog-body { padding: 7px 7px 8px 6px; }
.tabs { display: flex; align-items: flex-end; height: 20px; padding-left: 2px; }
.tabs button { height: 18px; padding: 1px 4px 0; border: 1px solid #919b9c; border-bottom: 0; border-radius: 3px 3px 0 0; background: linear-gradient(#fff, #f0efe6); }
.tabs .active { position: relative; height: 21px; margin: 0 1px -1px 0; padding: 0 17px 4px 7px; border-top: 3px solid #ffb83a; background: #fcfcfb; }
.sheet { padding: 10px 13px 12px 18px; border: 1px solid #919b9c; background: linear-gradient(#fcfcfe, #f4f3ee); }
fieldset { display: flex; gap: 16px; min-width: 0; margin: 0 3px 0 0; padding: 8px 0 8px 14px; border: 1px solid #d0d0bf; border-radius: 4px; }
legend { margin-left: -8px; padding: 0 2px; color: #0046d5; }
.fs-icon { width: 32px; height: 32px; margin-top: 4px; }
.fs-buttons { display: flex; gap: 10px; margin-top: 13px; }
.xp { height: 22px; padding: 0; border: 1px solid #003c74; border-radius: 3px; background: linear-gradient(#fff, #f0efe8 85%, #d6d0c5); }
.xp:disabled { border-color: #c9c7ba; background: #f5f4ea; color: #a1a192; }
.xp.focus { width: 121px; box-shadow: inset 0 0 0 2px #a5c4f3; }
.apply-all { width: 152px; }
.caption { margin: 14px 0 3px; }
.list { display: grid; grid-template-columns: minmax(0, 1fr) 17px; grid-template-rows: 176px 17px; border: 1px solid #7f9db9; background: #fff; }
.list-rows { overflow: hidden; }
.list label, .group { display: flex; align-items: center; gap: 5px; height: 16px; padding-left: 24px; white-space: nowrap; }
.list label span { flex: 1; padding-left: 1px; line-height: 16px; }
.list .selected span { background: #316ac5; color: #fff; }
.list .group { gap: 3px; }
.list input { appearance: none; flex: none; display: grid; place-items: center; width: 13px; height: 13px; margin: 0; border: 1px solid #1c5180; background: linear-gradient(135deg, #dcdcd7, #fff); }
.list input[type="checkbox"]:checked::before { content: ""; width: 4px; height: 7px; margin-bottom: 2px; border: solid #21a121; border-width: 0 2px 2px 0; transform: rotate(45deg); }
.list input[type="radio"] { border-radius: 50%; }
.list input[type="radio"]:checked::before { content: ""; width: 5px; height: 5px; border-radius: 50%; background: #21a121; }
.list .nested { padding-left: 43px; }
.bar-v, .bar-h { display: flex; padding: 1px; background: #f3f3ee; }
.bar-v { flex-direction: column; }
.list button { display: grid; place-items: center; width: 15px; height: 15px; border: 1px solid #b4c8f6; border-radius: 2px; background: linear-gradient(135deg, #e1eafe, #b9cdf9); color: #4d6185; }
.list button svg { width: 11px; height: 11px; }
.rail { display: flex; flex: 1; }
.bar-v .rail { flex-direction: column; padding-top: 50px; }
.rail i { display: grid; border: 1px solid #b4c8f6; border-radius: 2px; background: linear-gradient(90deg, #c9d8fc, #bdd0fb); }
.bar-v i { height: 57px; }
.bar-h i { width: 253px; }
.rail i::before { content: ""; place-self: center; width: 7px; height: 7px; background: repeating-linear-gradient(#eef4fe 0 1px, #8cb0f8 1px 2px); }
.bar-h i::before { background: repeating-linear-gradient(90deg, #eef4fe 0 1px, #8cb0f8 1px 2px); }
.corner { background: #ece9d8; }
.restore { display: block; width: 148px; margin: 15px 0 0 auto; }
.dialog footer { display: flex; justify-content: flex-end; gap: 8px; margin-top: 9px; }
.dialog footer .xp { width: 73px; }

/* taskbar */
.taskbar { display: flex; height: 30px; background: linear-gradient(#1f4fc4, #3f8cf3 8%, #2762dc 20%, #245dda 80%, #1941a5); color: #fff; }
.start { display: flex; align-items: center; gap: 4px; width: 96px; padding-left: 10px; border-radius: 0 10px 10px 0; background: linear-gradient(#2f7d30, #5fb85c 12%, #3a963a 30%, #3a9a3a 80%, #236b25); box-shadow: inset -3px 0 4px #1d5c20; font: italic bold 17px/24px "Liberation Sans", sans-serif; text-shadow: 1px 1px 1px #123c14; }
.start svg { width: 19px; height: 19px; }
.tasks { display: flex; flex: 1; gap: 2px; padding: 3px 0 2px 10px; }
.tasks button { display: flex; align-items: center; gap: 4px; width: 107px; padding-left: 8px; border-radius: 3px; background: linear-gradient(#5f9df9, #3c81f3 15%, #3a7ef0 85%, #2e68d8); }
.tasks .pressed { background: #1e50b8; box-shadow: inset 1px 1px 2px #123a8d; padding-left: 10px; }
.lang { align-self: center; width: 37px; }
.tray { display: flex; align-items: center; gap: 3px; width: 110px; border-left: 1px solid #0e3f9c; background: linear-gradient(#0f79d4, #1ba5f1 10%, #128fe8 30%, #139aee 85%, #0b6bc0); }
.tray time { margin-left: 2px; }
.expand { display: flex; margin-left: -9px; }
</style>
